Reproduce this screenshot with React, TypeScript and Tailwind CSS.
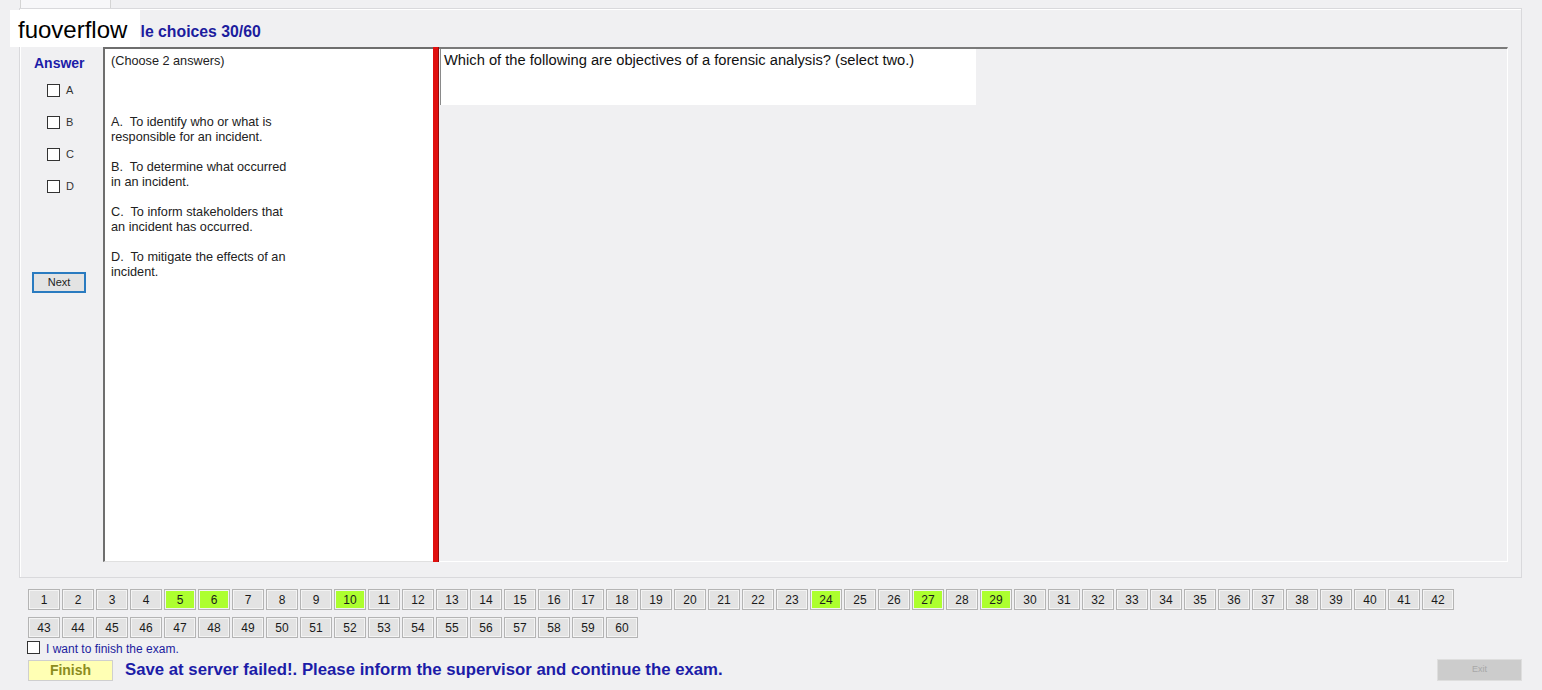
import { useState } from "react";

const answered = [5, 6, 10, 24, 27, 29];

const options = [
  { id: "A", lines: ["A.  To identify who or what is", "responsible for an incident."] },
  { id: "B", lines: ["B.  To determine what occurred", "in an incident."] },
  { id: "C", lines: ["C.  To inform stakeholders that", "an incident has occurred."] },
  { id: "D", lines: ["D.  To mitigate the effects of an", "incident."] },
];

const NumButton = ({ n }: { n: number }) => {
  const done = answered.includes(n);
  return (
    <div
      className={`w-[32px] h-[21px] flex items-center justify-center text-[12px] text-[#1a1a1a] border border-[#b4b4b4] shadow-[inset_0_0_0_1px_#f4f4f4] ${
        done ? "bg-[#adff2f]" : "bg-[#e3e3e3]"
      }`}
    >
      {n}
    </div>
  );
};

const CheckBox = ({ checked, onClick }: { checked: boolean; onClick: () => void }) => (
  <div
    onClick={onClick}
    className="w-[13px] h-[13px] border border-[#333] bg-white flex items-center justify-center cursor-pointer"
  >
    {checked && (
      <svg width="9" height="9" viewBox="0 0 9 9">
        <path d="M1 4.5 L3.5 7 L8 1.5" stroke="#222" strokeWidth="1.5" fill="none" />
      </svg>
    )}
  </div>
);

export default function App() {
  const [picked, setPicked] = useState<string[]>([]);
  const [finish, setFinish] = useState(false);

  const toggle = (id: string) =>
    setPicked((p) => (p.includes(id) ? p.filter((x) => x !== id) : [...p, id]));

  const row1 = Array.from({ length: 42 }, (_, i) => i + 1);
  const row2 = Array.from({ length: 18 }, (_, i) => i + 43);

  return (
    <div className="relative w-[1542px] h-[690px] overflow-hidden bg-[#f0f0f2] font-['Liberation_Sans',Arial,sans-serif] text-black">
      {/* tab strip */}
      <div className="h-[8px] pl-[20px] flex">
        <div className="w-[91px] h-[8px] border-l border-r border-[#d4d4d4] bg-[#f7f7f9]" />
      </div>

      {/* tab page */}
      <div className="ml-[19px] w-[1503px] h-[570px] border border-[#d9d9dc] shadow-[inset_1px_1px_0_#ffffff] flex flex-col">
        <div className="h-[38px] pl-[74px] pt-[14px] text-[15.8px] font-bold text-[#1c1c9e] leading-[18px]">
          Multiple choices 30/60
        </div>

        <div className="flex h-[515px]">
          {/* answer column */}
          <div className="w-[83px] flex flex-col">
            <div className="pl-[14px] pt-[8px] text-[14px] font-bold text-[#1c1ca8] leading-[16px]">Answer</div>
            <div className="flex flex-col gap-[19px] pl-[27px] mt-[13px]">
              {options.map((o) => (
                <div key={o.id} className="flex items-center gap-[6px] h-[13px]">
                  <CheckBox checked={picked.includes(o.id)} onClick={() => toggle(o.id)} />
                  <span className="text-[11px] text-[#333]">{o.id}</span>
                </div>
              ))}
            </div>
            <div className="ml-[12px] mt-[79px] w-[54px] h-[21px] border-2 border-[#2a7bc0] bg-[#e3e3e3] flex items-center justify-center text-[11px] text-[#222]">
              Next
            </div>
          </div>

          {/* options text box */}
          <div className="w-[330px] bg-white border-l-2 border-t-2 border-[#6e6e6e] border-b border-b-[#e0e0e0] pl-[6px] pt-[5px] text-[12.7px] leading-[15px] text-[#222]">
            <div>(Choose 2 answers)</div>
            <div className="mt-[46px] flex flex-col gap-[15px]">
              {options.map((o) => (
                <div key={o.id}>
                  {o.lines.map((l) => (
                    <div key={l} className="whitespace-pre">{l}</div>
                  ))}
                </div>
              ))}
            </div>
          </div>

          {/* red splitter */}
          <div className="w-[6px] bg-[#e0100f] border-r border-[#9a0c0c]" />

          {/* question panel */}
          <div className="w-[1069px] border-t-2 border-[#7a7a7a] border-r border-b border-r-white border-b-white pl-[1px]">
            <div className="w-[536px] h-[56px] bg-white border-l border-[#8a8a8a] pl-[3px] pt-[3px] text-[14.7px] leading-[17px] text-[#111]">
              Which of the following are objectives of a forensic analysis? (select two.)
            </div>
          </div>
        </div>
      </div>

      {/* question navigator */}
      <div className="pl-[28px] pt-[11px] flex flex-col gap-[7px]">
        <div className="flex gap-[2px]">
          {row1.map((n) => (
            <NumButton key={n} n={n} />
          ))}
        </div>
        <div className="flex gap-[2px]">
          {row2.map((n) => (
            <NumButton key={n} n={n} />
          ))}
        </div>
      </div>

      <div className="pl-[27px] mt-[3px] flex items-center gap-[6px] h-[13px]">
        <CheckBox checked={finish} onClick={() => setFinish(!finish)} />
        <span className="text-[12px] text-[#1c1c9e] leading-[13px] mt-[3px]">I want to finish the exam.</span>
      </div>

      <div className="flex items-center pl-[28px] pr-[20px] mt-[5px]">
        <div className="w-[85px] h-[21px] bg-[#ffffb4] border border-[#cfcfcf] flex items-center justify-center text-[14px] font-bold text-[#8c8c1e]">
          Finish
        </div>
        <div className="ml-[12px] text-[16.75px] font-bold text-[#1c1ca8] leading-[20px]">
          Save at server failed!. Please inform the supervisor and continue the exam.
        </div>
        <div className="ml-auto w-[85px] h-[22px] bg-[#cccccc] border border-[#dedede] flex items-center justify-center text-[9px] text-[#a8a8a8]">
          Exit
        </div>
      </div>

      {/* watermark */}
      <div className="absolute left-[10px] top-[10px] w-[130px] h-[37px] bg-white pl-[8px] pt-[6px] text-[24px] leading-[28px] text-black">
        fuoverflow
      </div>
    </div>
  );
}
